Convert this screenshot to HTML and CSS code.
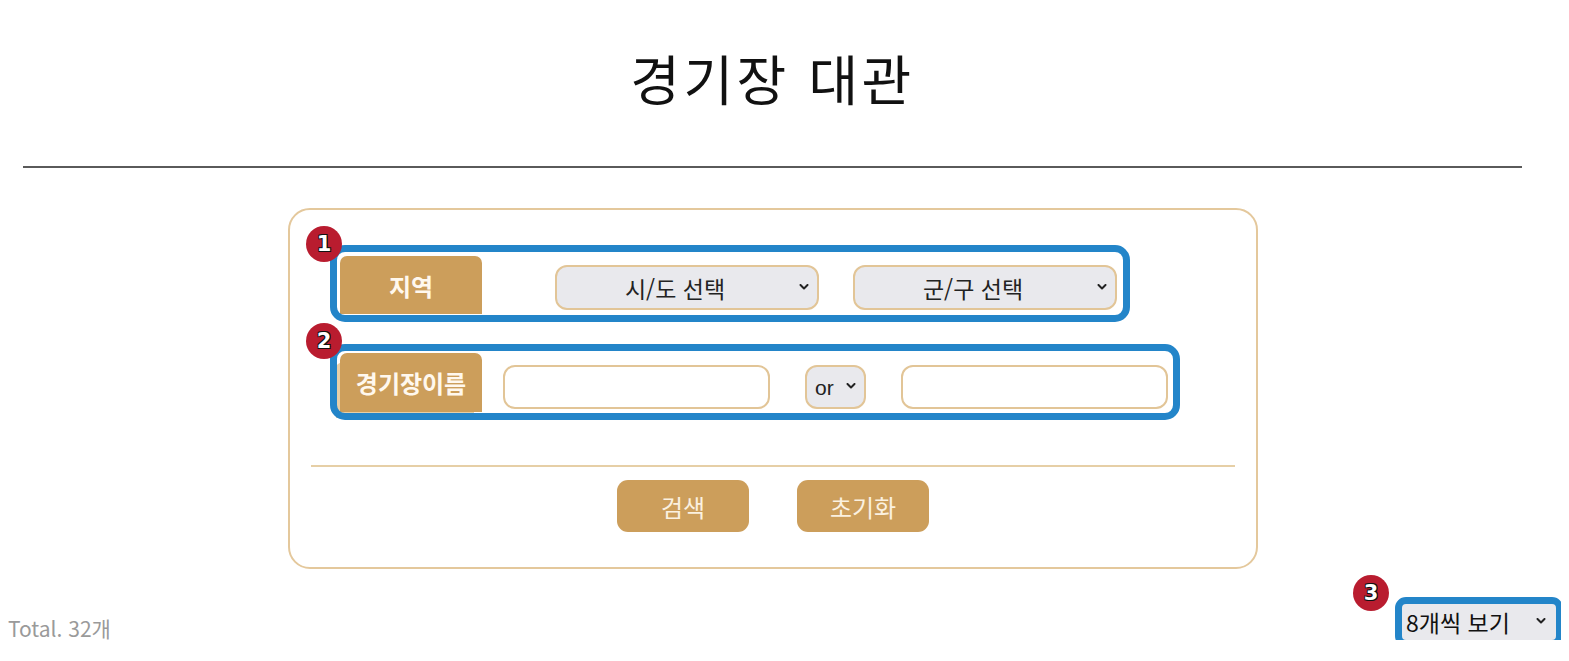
FILE: index.html
```html
<!DOCTYPE html>
<html lang="ko">
<head>
<meta charset="utf-8">
<title>경기장 대관</title>
<link rel="stylesheet" href="styles.css">
</head>
<body>
<div class="page">
  <header class="header">
    <h1 class="title">경기장 대관</h1>
    <hr class="rule">
  </header>

  <section class="search-box">
    <div class="row row-region">
      <div class="label">지역</div>
      <div class="select-wrap sel-region first">
        <select class="select"><option>시/도 선택</option></select>
        <svg class="chev" viewBox="0 0 10 6" width="10" height="6"><path d="M1.5 1l3.5 3.5 3.5-3.5" fill="none" stroke="#222" stroke-width="2" stroke-linecap="round" stroke-linejoin="round"/></svg>
      </div>
      <div class="select-wrap sel-region">
        <select class="select"><option>군/구 선택</option></select>
        <svg class="chev" viewBox="0 0 10 6" width="10" height="6"><path d="M1.5 1l3.5 3.5 3.5-3.5" fill="none" stroke="#222" stroke-width="2" stroke-linecap="round" stroke-linejoin="round"/></svg>
      </div>
      <span class="frame frame-1"></span>
      <span class="badge badge-row">1</span>
    </div>

    <div class="row row-name">
      <div class="label">경기장이름</div>
      <input class="text-input first" type="text">
      <div class="select-wrap sel-or">
        <select class="select select-or"><option>or</option></select>
        <svg class="chev" viewBox="0 0 10 6" width="10" height="6"><path d="M1.5 1l3.5 3.5 3.5-3.5" fill="none" stroke="#222" stroke-width="2" stroke-linecap="round" stroke-linejoin="round"/></svg>
      </div>
      <input class="text-input" type="text">
      <span class="frame frame-2"></span>
      <span class="badge badge-row">2</span>
    </div>

    <hr class="divider">

    <div class="buttons">
      <button class="btn" type="button">검색</button>
      <button class="btn" type="button">초기화</button>
    </div>
  </section>

  <div class="list-bar">
    <span class="total">Total. 32개</span>
    <div class="select-wrap sel-count">
      <select class="select select-count"><option>8개씩 보기</option></select>
      <svg class="chev" viewBox="0 0 10 6" width="10" height="6"><path d="M1.5 1l3.5 3.5 3.5-3.5" fill="none" stroke="#222" stroke-width="2" stroke-linecap="round" stroke-linejoin="round"/></svg>
      <span class="frame frame-3"></span>
      <span class="badge badge-count">3</span>
    </div>
  </div>
</div>
</body>
</html>
```

FILE: styles.css
```css
* { box-sizing: border-box; }

body {
  margin: 8px;
  font-family: "Noto Sans CJK KR", "Noto Sans", sans-serif;
  color: #111;
  background: #fff;
}

.header {
  margin-left: 15px;
  width: 1499px;
  padding-top: 35px;
}

.title {
  margin: 0;
  font-size: 54px;
  font-weight: 400;
  letter-spacing: 3.5px;
  line-height: 70px;
  text-align: center;
  color: #111;
}

.rule {
  margin: 53px 0 0;
  border: 0;
  height: 2px;
  background: #5a5a5a;
}

.search-box {
  width: 970px;
  margin: 40px 0 0 280px;
  border: 2px solid #e4c89c;
  border-radius: 22px;
  padding: 46px 21px 35px 50px;
}

.row {
  position: relative;
  display: flex;
  align-items: flex-end;
  height: 58px;
}

.row-name {
  margin-top: 39px;
  height: 59px;
}

.label {
  align-self: stretch;
  width: 142px;
  background: #cc9e5b;
  color: #fff8ee;
  font-weight: 700;
  font-size: 24px;
  border-radius: 7px 7px 0 0;
  display: flex;
  align-items: center;
  justify-content: center;
}

.row-name .label {
  box-shadow: -6px 8px 0 -2px #e8cfa6;
}

.select-wrap {
  position: relative;
  display: flex;
}

.select {
  appearance: none;
  -webkit-appearance: none;
  width: 100%;
  height: 100%;
  margin: 0;
  background: #e9e9ed;
  border: 2px solid #e2c597;
  border-radius: 12px;
  font-family: "Noto Sans CJK KR", "Noto Sans", sans-serif;
  font-size: 23px;
  color: #222;
  text-align: center;
  text-align-last: center;
  padding: 0 24px 0 0;
  outline: none;
}

.chev {
  position: absolute;
  top: 50%;
  right: 10px;
  margin-top: -4px;
  pointer-events: none;
}

.sel-region {
  width: 264px;
  height: 45px;
  margin-bottom: 4px;
  margin-left: 34px;
}

.sel-region.first { margin-left: 73px; }

.text-input {
  width: 267px;
  height: 44px;
  margin: 0 0 3px 35px;
  border: 2px solid #e2c597;
  border-radius: 12px;
  background: #fff;
  font-size: 18px;
  outline: none;
}

.text-input.first { margin-left: 21px; }

.sel-or {
  width: 61px;
  height: 44px;
  margin: 0 0 3px 35px;
}

.select-or {
  font-family: "Liberation Sans", Arial, sans-serif;
  font-size: 21px;
  text-align: left;
  text-align-last: left;
  padding-left: 8px;
}

.divider {
  margin: 53px 0 0 -29px;
  width: 924px;
  border: 0;
  height: 2px;
  background: #e6cfa6;
}

.buttons {
  display: flex;
  justify-content: center;
  gap: 48px;
  margin: 13px 0 0 -29px;
  width: 924px;
}

.btn {
  width: 132px;
  height: 52px;
  border: 0;
  border-radius: 11px;
  background: #cc9e5b;
  color: #fbf1e0;
  font-family: "Noto Sans CJK KR", "Noto Sans", sans-serif;
  font-size: 24px;
  padding: 0;
}

.list-bar {
  display: flex;
  justify-content: space-between;
  align-items: flex-end;
  margin-top: 34px;
  padding-right: 5px;
}

.total {
  font-size: 21px;
  color: #9a9a9a;
  line-height: 26px;
  margin-bottom: -1px;
}

.sel-count {
  width: 154px;
  height: 37px;
}

.select-count {
  border: 0;
  border-radius: 0;
  text-align: left;
  text-align-last: left;
  padding-left: 4px;
  font-size: 23px;
  color: #111;
}

/* annotation overlays */
.frame {
  position: absolute;
  border: 7px solid #2385c9;
  border-radius: 15px;
  pointer-events: none;
}

.frame-1 { left: -10px; top: -11px; width: 800px; height: 77px; }
.frame-2 { left: -10px; top: -9px; width: 850px; height: 76px; }
.frame-3 { left: -7px; top: -6px; width: 168px; height: 50px; border-radius: 11px; }

.badge {
  position: absolute;
  width: 36px;
  height: 36px;
  border-radius: 50%;
  background: #b91c2f;
  color: #fff;
  font-family: "DejaVu Sans", sans-serif;
  font-weight: 700;
  font-size: 21px;
  line-height: 36px;
  text-align: center;
  text-shadow: -1px -1px 0 #111, 1px -1px 0 #111, -1px 1px 0 #111, 1px 1px 0 #111;
}

.badge-row { left: -34px; top: -30px; }
.badge-count { left: -49px; top: -28px; }
```
